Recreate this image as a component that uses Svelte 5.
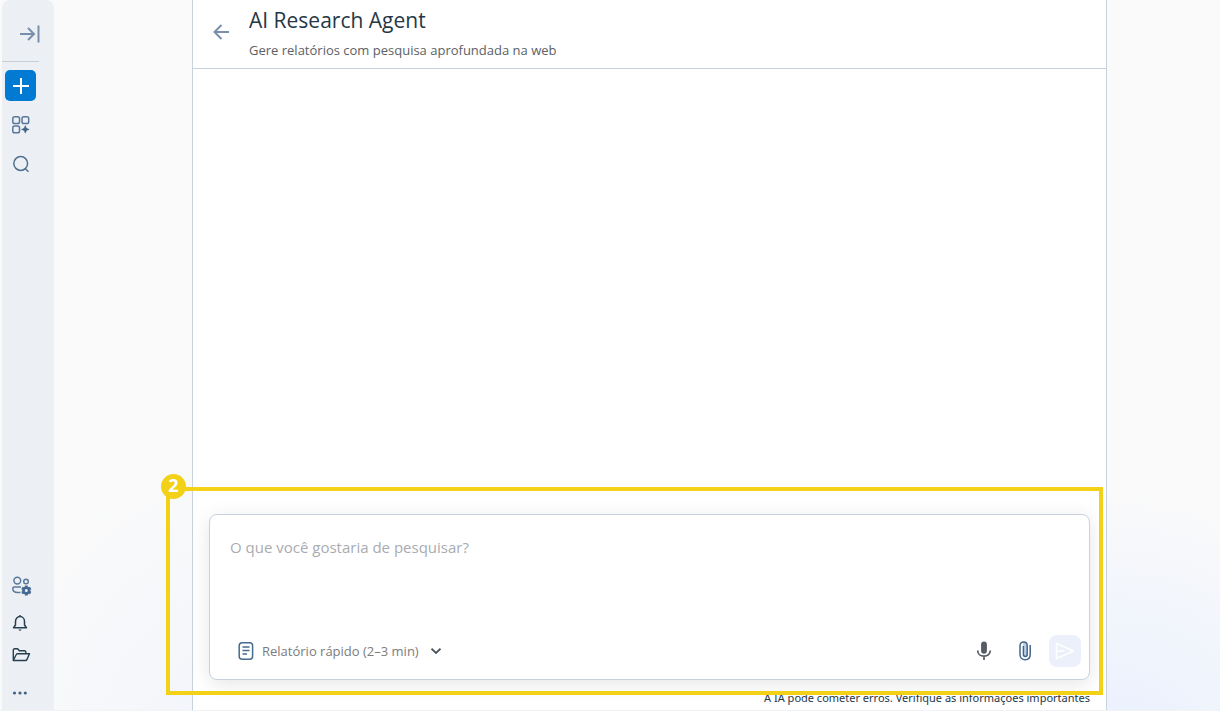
<script>
  let question = $state('');
  let report = $state('quick');
</script>

<div class="app">
  <nav class="sidebar" aria-label="Menu principal">
    <div class="group">
      <button class="item expand" aria-label="Expandir menu">
        <svg width="20" height="18" viewBox="0 0 20 18" fill="none" stroke="#7890ab" stroke-width="2"><path d="M0 9h14M8 3l6 6-6 6M18.500 .5v17" /></svg>
      </button>
      <hr />
      <button class="item add" aria-label="Novo">
        <svg width="16" height="16" viewBox="0 0 16 16" fill="none" stroke="#fff" stroke-width="2"><path d="M8 0v16M0 8h16" /></svg>
      </button>
      <button class="item apps" aria-label="Aplicativos">
        <svg width="18" height="18" viewBox="0 0 18 18" fill="none" stroke="#59779a" stroke-width="1.500"><rect x=".8" y=".8" width="6.700" height="6.700" rx="1.800" /><rect x="10" y=".8" width="6.700" height="6.700" rx="1.800" /><rect x=".8" y="10" width="6.700" height="6.700" rx="1.800" /><path d="M13.300 9l1.300 3.100 3.100 1.300-3.100 1.300-1.300 3.100-1.300-3.100-3.100-1.300 3.100-1.300z" fill="#456487" stroke="none" /></svg>
      </button>
      <button class="item" aria-label="Pesquisar">
        <svg width="18" height="18" viewBox="0 0 18 18" fill="none" stroke="#52718f" stroke-width="1.500"><circle cx="8.700" cy="8.500" r="6.900" /><path d="M13 13.500l3.500 3.300" /></svg>
      </button>
    </div>
    <div class="group bottom">
      <button class="item team" aria-label="Equipe">
        <svg width="20" height="20" viewBox="0 0 20 20" fill="none" stroke="#59779a" stroke-width="1.500"><circle cx="5.300" cy="4.600" r="3.400" /><circle cx="14" cy="5.500" r="2.300" /><path d="M9 11H2.200C1 11 .8 11.800.8 12.500c0 2.600 2.400 4 5 4h2.700" /><circle cx="14.300" cy="14.500" r="2.800" stroke="#456b94" stroke-width="2.600" /><path d="M14.300 9.500v2M14.300 17.500v2M9.900 12l2 1.100M16.700 15.900l2 1.100M9.900 17l2-1.100M16.700 13.100l2-1.100" stroke="#456b94" stroke-width="2.800" /></svg>
      </button>
      <button class="item bell" aria-label="Notificações">
        <svg width="16" height="18" viewBox="0 0 16 18" fill="none" stroke="#263f50" stroke-width="1.500" stroke-linejoin="round"><path d="M8 1v1.500M3.500 11V7.500C3.500 4.500 5.500 2.600 8 2.600s4.500 1.900 4.500 4.900V11l2 2.700h-13z" /><path d="M6.200 15.500h3.600L8 17z" fill="#263f50" stroke="none" /></svg>
      </button>
      <button class="item folder" aria-label="Arquivos">
        <svg width="19" height="14" viewBox="0 0 19 14" fill="none" stroke="#263f50" stroke-width="1.400" stroke-linejoin="round"><path d="M1.300 12.500V2.200c0-.8.500-1.400 1.300-1.400h3l1.800 2h5.100c.8 0 1.300.6 1.300 1.300v1.700M1.300 12.500L4 7c.3-.8.800-1.200 1.500-1.200h12L15 11.400c-.3.700-.8 1.100-1.500 1.100z" /></svg>
      </button>
      <button class="item more" aria-label="Mais opções">
        <svg width="16" height="4" viewBox="0 0 16 4" fill="#406386"><circle cx="2.500" cy="2" r="1.600" /><circle cx="8" cy="2" r="1.600" /><circle cx="13.300" cy="2" r="1.600" /></svg>
      </button>
    </div>
  </nav>

  <div class="workspace">
    <main>
      <header>
        <button class="back" aria-label="Voltar">
          <svg width="17" height="16" viewBox="0 0 17 16" fill="none" stroke="#7890ab" stroke-width="2"><path d="M16 8H1.500M8.500 1l-7 7 7 7" /></svg>
        </button>
        <div class="titles">
          <h1>AI Research Agent</h1>
          <p>Gere relatórios com pesquisa aprofundada na web</p>
        </div>
      </header>

      <section class="results" aria-label="Resultados"></section>

      <div class="compose">
        <form class="composer" onsubmit={(event) => event.preventDefault()}>
          <textarea bind:value={question} aria-label="Pesquisa" placeholder="O que você gostaria de pesquisar?"></textarea>
          <div class="tools">
            <label class="report">
              <svg width="16" height="18" viewBox="0 0 16 18" fill="none" stroke="#456b8f" stroke-width="1.500"><rect x="1.200" y=".8" width="13.400" height="16.400" rx="3" /><path d="M4.500 5h7M4.500 8.500h7M4.500 12h4.500" stroke-width="1.400" /></svg>
              <select bind:value={report} aria-label="Tipo de relatório">
                <option value="quick">Relatório rápido (2–3 min)</option>
              </select>
              <svg width="10" height="6" viewBox="0 0 10 6" fill="none" stroke="#4b525a" stroke-width="1.800"><path d="M.5.700L5 5 9.500.700" /></svg>
            </label>
            <div class="actions">
              <button type="button" aria-label="Gravar voz">
                <svg width="16" height="20" viewBox="0 0 16 20"><rect x="5.100" y=".5" width="5.800" height="12.200" rx="2.900" fill="#555c64" /><path d="M1.700 9.500c0 3.500 2.700 5.700 6.300 5.700s6.300-2.200 6.300-5.700M8 15v4" fill="none" stroke="#555c64" stroke-width="1.700" /></svg>
              </button>
              <button type="button" aria-label="Anexar arquivo">
                <svg width="14" height="20" viewBox="0 0 14 20" fill="none" stroke="#42678d" stroke-width="1.500"><path d="M5 1.200h4v12.500c0 1.100-.8 1.800-1.900 1.800s-1.900-.7-1.900-1.800V5c0-2.300 3.800-2.300 3.800 0v8.700c0 2.400-3.800 2.400-3.800 0" fill="#c4d2df" stroke="none" /><path d="M12.200 4v9.500c0 3.200-2.100 5.200-5 5.200s-5.200-2-5.200-5.200V4.700c0-2.200 1.400-3.600 3.600-3.600s3.600 1.400 3.600 3.600v8.800c0 1.200-.8 1.900-1.900 1.900s-1.900-.7-1.900-1.900V5" /></svg>
              </button>
              <button class="send" type="submit" aria-label="Enviar">
                <svg width="20" height="18" viewBox="0 0 20 18" fill="none" stroke="#fff" stroke-width="1.500" stroke-linejoin="round"><path d="M1.500 1.500L18.500 9l-17 7.500zM1.500 9h8" /></svg>
              </button>
            </div>
          </div>
        </form>
        <div class="highlight"><span>2</span></div>
        <p class="notice">A IA pode cometer erros. Verifique as informações importantes</p>
      </div>
    </main>
  </div>
</div>

<style>
  :global(body) {
    margin: 0;
    font-family: "Open Sans", "Noto Sans", sans-serif;
  }
  .app, .app * { box-sizing: border-box; }
  .app {
    display: flex;
    min-height: 100vh;
    padding-left: 2px;
    border-bottom: 1px solid #f2f3f5;
    background:
      radial-gradient(ellipse 260px 260px at 92% 105%, #e9f0fe, transparent),
      radial-gradient(ellipse 240px 300px at 18% 105%, #f2f5fb, transparent),
      #fafafa;
  }
  button {
    display: flex;
    align-items: center;
    justify-content: center;
    padding: 0;
    border: 0;
    background: none;
    cursor: pointer;
  }
  svg { display: block; flex: none; }
  .sidebar {
    display: flex;
    flex: none;
    flex-direction: column;
    justify-content: space-between;
    width: 52px;
    border-radius: 8px 8px 0 0;
    background: #ecf0f4;
  }
  .group { display: flex; flex-direction: column; padding-left: 3px; }
  .item { width: 32px; height: 32px; }
  .expand { width: 48px; height: 61px; padding: 6px 0 0 2px; }
  hr {
    width: 37px;
    height: 1px;
    margin: 0 0 8px -3px;
    border: 0;
    background: #c7cfd7;
  }
  .add {
    width: 31px;
    height: 31px;
    border-radius: 5px;
    background: #007ad3;
  }
  .apps { margin: 8px 0 7px; }
  .team { height: 40px; padding-left: 2px; }
  .bell { width: 30px; height: 34px; }
  .folder { height: 30px; }
  .more { width: 30px; height: 46px; margin-bottom: -6px; }
  .workspace {
    display: flex;
    flex: 1;
    min-width: 0;
    padding: 0 113px 0 138px;
  }
  main {
    display: flex;
    flex: 1;
    flex-direction: column;
    min-width: 0;
    border: solid #c8d2df;
    border-width: 0 1px;
    background: #fff;
  }
  header {
    display: flex;
    align-items: center;
    height: 69px;
    padding: 0 20px 4px;
    border-bottom: 1px solid #c8d2df;
  }
  .back { width: 17px; margin-right: 19px; }
  .titles { padding-top: 2px; }
  h1 {
    margin: 0;
    color: #263746;
    font-size: 21px;
    font-weight: 400;
    line-height: 34px;
  }
  p { margin: 0; }
  header p { color: #5c6166; font-size: 13px; line-height: 26px; }
  .results { flex: 1; }
  .compose { position: relative; padding: 0 16px 3px; }
  .composer {
    height: 166px;
    padding: 20px 8px 12px 20px;
    display: flex;
    flex-direction: column;
    border: 1px solid #c8d2df;
    border-radius: 8px;
    background: #fff;
    box-shadow: 0 4px 20px rgba(0, 0, 0, 0.1);
  }
  textarea {
    flex: 1;
    min-height: 0;
    padding: 0;
    border: 0;
    outline: 0;
    resize: none;
    background: none;
    color: #263746;
    font: 15px/24px "Open Sans", "Noto Sans", sans-serif;
  }
  textarea::placeholder { color: #a8acb1; opacity: 1; }
  .tools, .report, .actions { display: flex; align-items: center; }
  .tools { justify-content: space-between; }
  .report { gap: 8px; padding-left: 8px; }
  select {
    padding: 0 4px 0 0;
    border: 0;
    outline: 0;
    appearance: none;
    background: none;
    color: #7b7c7e;
    font: 13px/24px "Open Sans", "Noto Sans", sans-serif;
  }
  .actions { gap: 8px; }
  .actions button { width: 33px; height: 32px; }
  .actions .send {
    width: 32px;
    border-radius: 8px;
    background: #ebf0fb;
  }
  .notice {
    padding-top: 9px;
    color: #263746;
    font-family: "Noto Sans", sans-serif;
    font-size: 11px;
    line-height: 18px;
    text-align: right;
  }
  .highlight {
    position: absolute;
    inset: -27px 3px 15px -27px;
    border: 4px solid #f2d117;
    pointer-events: none;
  }
  .highlight span {
    position: absolute;
    top: -17px;
    left: -9px;
    width: 25px;
    height: 25px;
    border-radius: 50%;
    background: #f2d117;
    color: #fff;
    font-family: "Noto Sans", sans-serif;
    font-size: 18px;
    font-weight: 700;
    line-height: 23px;
    text-align: center;
  }
</style>
